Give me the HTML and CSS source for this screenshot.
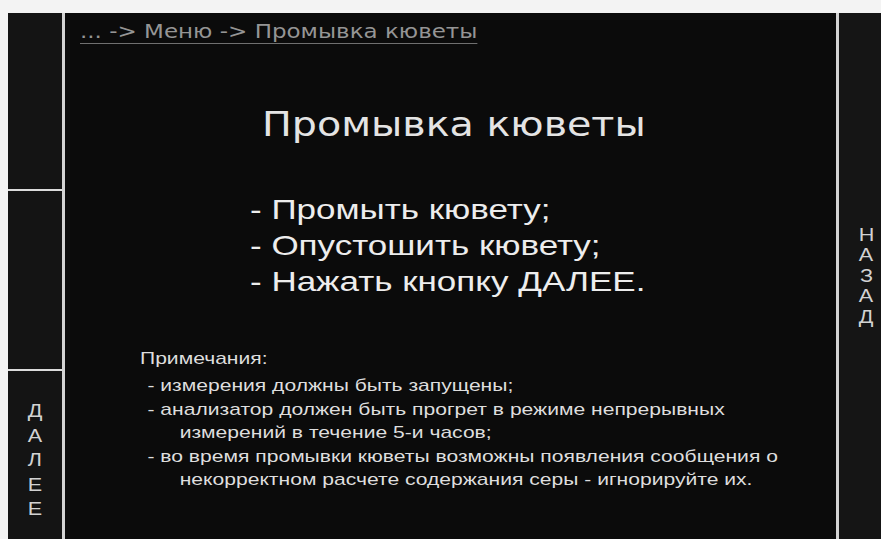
FILE: index.html
```html
<!DOCTYPE html>
<html lang="ru">
<head>
<meta charset="utf-8">
<title>Промывка кюветы</title>
<link rel="stylesheet" href="styles.css">
</head>
<body>
<div class="screen">
  <aside class="side side-left">
    <div class="pane pane-top"></div>
    <div class="pane pane-mid"></div>
    <div class="pane pane-bottom">
      <div class="vlabel vlabel-next">
        <span>Д</span><span>А</span><span>Л</span><span>Е</span><span>Е</span>
      </div>
    </div>
  </aside>

  <main class="main">
    <div class="crumbs"><span class="crumbs-text">... -&gt; Меню -&gt; Промывка кюветы</span></div>
    <h1 class="title">Промывка кюветы</h1>
    <ul class="steps">
      <li>- Промыть кювету;</li>
      <li>- Опустошить кювету;</li>
      <li>- Нажать кнопку ДАЛЕЕ.</li>
    </ul>
    <div class="notes">
      <div class="notes-head">Примечания:</div>
      <ul class="notes-list">
        <li>- измерения должны быть запущены;</li>
        <li>- анализатор должен быть прогрет в режиме непрерывных<br>измерений в течение 5-и часов;</li>
        <li>- во время промывки кюветы возможны появления сообщения о<br>некорректном расчете содержания серы - игнорируйте их.</li>
      </ul>
    </div>
  </main>

  <aside class="side side-right">
    <div class="vlabel vlabel-back">
      <span>Н</span><span>А</span><span>З</span><span>А</span><span>Д</span>
    </div>
  </aside>
</div>
</body>
</html>
```

FILE: styles.css
```css
html, body {
  margin: 0;
  padding: 0;
}

body {
  background: #f3f3f3;
  width: 881px;
  height: 539px;
  overflow: hidden;
  font-family: "Liberation Sans", Arial, sans-serif;
}

.screen {
  display: flex;
  align-items: stretch;
  box-sizing: border-box;
  height: 539px;
  width: 881px;
  padding: 13px 0 0 8px;
}

/* side button columns */
.side {
  background: #141414;
  color: #d2d2d2;
}

.side-left {
  flex: 0 0 54px;
  display: flex;
  flex-direction: column;
}

.pane {
  box-sizing: border-box;
}

.pane-top {
  height: 176px;
}

.pane-mid {
  height: 180px;
  border-top: 2px solid #dcdcdc;
}

.pane-bottom {
  flex: 1;
  border-top: 2px solid #dcdcdc;
  padding-top: 28px;
}

.side-right {
  flex: 1;
  min-width: 0;
  display: flex;
  flex-direction: column;
  justify-content: center;
  padding-left: 12px;
  background: #151515;
}

.vlabel {
  font-size: 18px;
  text-align: center;
}

.vlabel span {
  display: block;
  width: fit-content;
  margin: 0 auto;
  transform: scaleX(1.2);
}

.vlabel-next {
  line-height: 24.5px;
}

.vlabel-back {
  line-height: 20.5px;
}

/* central screen */
.main {
  flex: 0 0 777px;
  box-sizing: border-box;
  border-left: 3px solid #d4d4d4;
  border-right: 3px solid #d4d4d4;
  background: #0b0b0b;
  color: #e6e6e6;
  overflow: hidden;
}

.crumbs {
  padding: 7px 0 0 15px;
  font-family: "DejaVu Sans", Verdana, sans-serif;
  font-size: 19px;
  line-height: 22px;
  color: #959595;
  white-space: nowrap;
}

.crumbs-text {
  display: inline-block;
  transform: scaleX(1.21);
  transform-origin: left center;
  text-decoration: underline;
  text-decoration-thickness: 1px;
  text-underline-offset: 5px;
  text-decoration-color: #707070;
}

.title {
  width: fit-content;
  margin: 63px auto 0;
  font-family: "DejaVu Sans", Verdana, sans-serif;
  font-weight: normal;
  font-size: 33px;
  line-height: 40px;
  white-space: nowrap;
  color: #e4e4e4;
  transform: translateX(3px) scaleX(1.2);
}

.steps {
  width: fit-content;
  list-style: none;
  margin: 47px 0 0 185px;
  padding: 0;
  font-size: 28px;
  line-height: 36px;
  color: #ededed;
  white-space: nowrap;
  transform: scaleX(1.25);
  transform-origin: left center;
}

.notes {
  width: fit-content;
  margin: 47px 0 0 75px;
  font-size: 17px;
  color: #dedede;
  white-space: nowrap;
  transform: scaleX(1.24);
  transform-origin: left center;
}

.notes-head {
  line-height: 24px;
  margin-bottom: 3px;
}

.notes-list {
  list-style: none;
  margin: 0;
  padding: 0 0 0 32px;
  line-height: 23.5px;
}

.notes-list li {
  text-indent: -26px;
}
```
